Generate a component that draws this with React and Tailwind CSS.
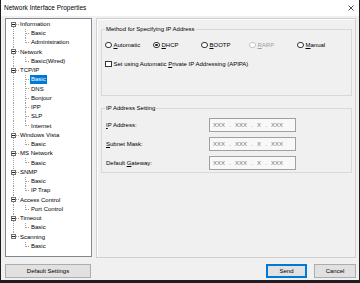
import React from 'react';

const LINE = '#a0a0a0';

const tree = [
  { name: 'Information', children: ['Basic', 'Administration'] },
  { name: 'Network', children: ['Basic(Wired)'] },
  { name: 'TCP/IP', children: ['Basic', 'DNS', 'Bonjour', 'IPP', 'SLP', 'Internet'] },
  { name: 'Windows Vista', children: ['Basic'] },
  { name: 'MS Network', children: ['Basic'] },
  { name: 'SNMP', children: ['Basic', 'IP Trap'] },
  { name: 'Access Control', children: ['Port Control'] },
  { name: 'Timeout', children: ['Basic'] },
  { name: 'Scanning', children: ['Basic'] },
];

// flatten so every row knows its place; rows are 9/9/9/10px so lines stay on whole pixels
const rows = [];
tree.forEach((root, ri) => {
  const rootLast = ri === tree.length - 1;
  rows.push({ kind: 'root', name: root.name, first: ri === 0, last: rootLast });
  root.children.forEach((c, ci) => {
    rows.push({
      kind: 'child',
      name: c,
      rootLast,
      lastChild: ci === root.children.length - 1,
      selected: ri === 2 && ci === 0,
    });
  });
});

const RootRow = ({ name, first, last, tall }) => {
  const h = tall ? 10 : 9;
  return (
    <div className={'flex items-center ' + (tall ? 'h-[10px]' : 'h-[9px]')}>
      <svg width="14" height={h} className="shrink-0" shapeRendering="crispEdges">
        {!first && <line x1="7.5" y1="0" x2="7.5" y2="2" stroke={LINE} strokeDasharray="1 1" />}
        {!last && <line x1="7.5" y1="7" x2="7.5" y2={h} stroke={LINE} strokeDasharray="1 1" />}
        <line x1="10" y1="4.5" x2="13" y2="4.5" stroke={LINE} strokeDasharray="1 1" />
        <rect x="5.5" y="2.5" width="4" height="4" fill="#fff" stroke="#6f6f6f" />
        <line x1="6" y1="4.5" x2="9" y2="4.5" stroke="#222" />
      </svg>
      <span className="leading-[9px] whitespace-nowrap">{name}</span>
    </div>
  );
};

const ChildRow = ({ name, rootLast, lastChild, selected, tall }) => {
  const h = tall ? 10 : 9;
  return (
    <div className={'flex items-center ' + (tall ? 'h-[10px]' : 'h-[9px]')}>
      <svg width="24" height={h} className="shrink-0" shapeRendering="crispEdges">
        {!rootLast && <line x1="7.5" y1="0" x2="7.5" y2={h} stroke={LINE} strokeDasharray="1 1" />}
        <line x1="19.5" y1="0" x2="19.5" y2={lastChild ? 4.5 : h} stroke={LINE} strokeDasharray="1 1" />
        <line x1="20" y1="4.5" x2="24" y2="4.5" stroke={LINE} strokeDasharray="1 1" />
      </svg>
      <span
        className={
          'leading-[9px] px-[1px] whitespace-nowrap ' +
          (selected ? 'bg-[#0078d7] text-white' : '')
        }
      >
        {name}
      </span>
    </div>
  );
};

const Radio = ({ label, accel, checked, disabled }) => (
  <div className="w-[48px] flex items-center gap-[2px]">
    <span
      className={
        'w-[6.5px] h-[6.5px] rounded-full border bg-white flex items-center justify-center shrink-0 ' +
        (disabled ? 'border-[#c4c4c4]' : 'border-[#333]')
      }
    >
      {checked && <span className="w-[2.5px] h-[2.5px] rounded-full bg-[#222]" />}
    </span>
    <span className={'whitespace-nowrap ' + (disabled ? 'text-[#a0a0a0]' : '')}>
      <u>{accel}</u>
      {label}
    </span>
  </div>
);

const IpRow = ({ accelBefore, accel, rest }) => (
  <div className="flex items-center h-[14px]">
    <div className="w-[107px] pl-[4px] whitespace-nowrap">
      {accelBefore}
      <u>{accel}</u>
      {rest}
    </div>
    <div className="w-[87px] h-[14px] border border-[#a0a0a0] bg-[#f8f8f8] flex items-center pl-[3px] text-[#777] whitespace-nowrap [word-spacing:2.5px]">
      XXX . XXX . X . XXX
    </div>
  </div>
);

export default function App() {
  return (
    <div className="w-[360px] h-[283px] flex flex-col bg-[#f0f0f0] border-l border-r border-b-[3px] border-[#1e1e1e] text-[6px] text-black overflow-hidden font-['Liberation_Sans',Arial,sans-serif]">
      {/* title bar */}
      <div className="h-[16px] shrink-0 bg-white flex items-center justify-between pl-[3px] pr-[5px]">
        <span className="text-[6.5px] whitespace-nowrap">Network Interface Properties</span>
        <svg width="6" height="6" viewBox="0 0 6 6">
          <path d="M0.5 0.5 L5.5 5.5 M5.5 0.5 L0.5 5.5" stroke="#222" strokeWidth="0.8" />
        </svg>
      </div>

      <div className="flex-1 flex flex-col pl-[4px] pr-[3px] pt-[2px]">
        <div className="flex gap-[4px] h-[240px] items-start">
          {/* tree */}
          <div className="w-[87px] h-[239px] bg-white border border-[#828790] pt-[1px] overflow-hidden">
            {rows.map((r, i) =>
              r.kind === 'root' ? (
                <RootRow key={i} {...r} tall={i % 4 === 3} />
              ) : (
                <ChildRow key={i} {...r} tall={i % 4 === 3} />
              )
            )}
          </div>

          {/* settings panel */}
          <div className="w-[260px] h-[240px] border border-[#d0d0d0] shadow-[inset_1px_1px_0_#fff] pl-[4px] pr-[3px]">
            <fieldset className="border border-[#d8d8d8] mt-[6.5px] h-[70px]">
              <legend className="ml-[3px] px-[1px] leading-[7px] whitespace-nowrap">
                Method for Specifying IP Address
              </legend>
              <div className="flex items-center h-[8px] mt-[8.5px] pl-[3px]">
                <Radio accel="A" label="utomatic" />
                <Radio accel="D" label="HCP" checked />
                <Radio accel="B" label="OOTP" />
                <Radio accel="R" label="ARP" disabled />
                <Radio accel="M" label="anual" />
              </div>
              <div className="flex items-center h-[8px] mt-[11px] pl-[3px] gap-[2px]">
                <span className="w-[6.5px] h-[6.5px] border border-[#333] bg-white shrink-0" />
                <span className="whitespace-nowrap">
                  Set using Automatic <u>P</u>rivate IP Addressing (APIPA)
                </span>
              </div>
            </fieldset>

            <fieldset className="border border-[#d8d8d8] mt-[9px] h-[68.5px]">
              <legend className="ml-[3px] px-[1px] leading-[7px] whitespace-nowrap">
                IP Address Setting
              </legend>
              <div className="flex flex-col gap-[5px] mt-[6.5px]">
                <IpRow accelBefore="" accel="I" rest="P Address:" />
                <IpRow accelBefore="" accel="S" rest="ubnet Mask:" />
                <IpRow accelBefore="Default " accel="G" rest="ateway:" />
              </div>
            </fieldset>
          </div>
        </div>

        {/* buttons */}
        <div className="flex items-center justify-between mt-[6px] h-[14px]">
          <button className="w-[86px] h-[14px] bg-[#e1e1e1] border border-[#adadad] flex items-center justify-center">
            Default Settings
          </button>
          <div className="flex gap-[7px]">
            <button className="w-[41px] h-[14px] bg-[#e1e1e1] border border-[#0078d7] shadow-[inset_0_0_0_1px_#0078d7] flex items-center justify-center">
              Send
            </button>
            <button className="w-[42px] h-[14px] bg-[#e1e1e1] border border-[#adadad] flex items-center justify-center">
              Cancel
            </button>
          </div>
        </div>
      </div>
    </div>
  );
}
